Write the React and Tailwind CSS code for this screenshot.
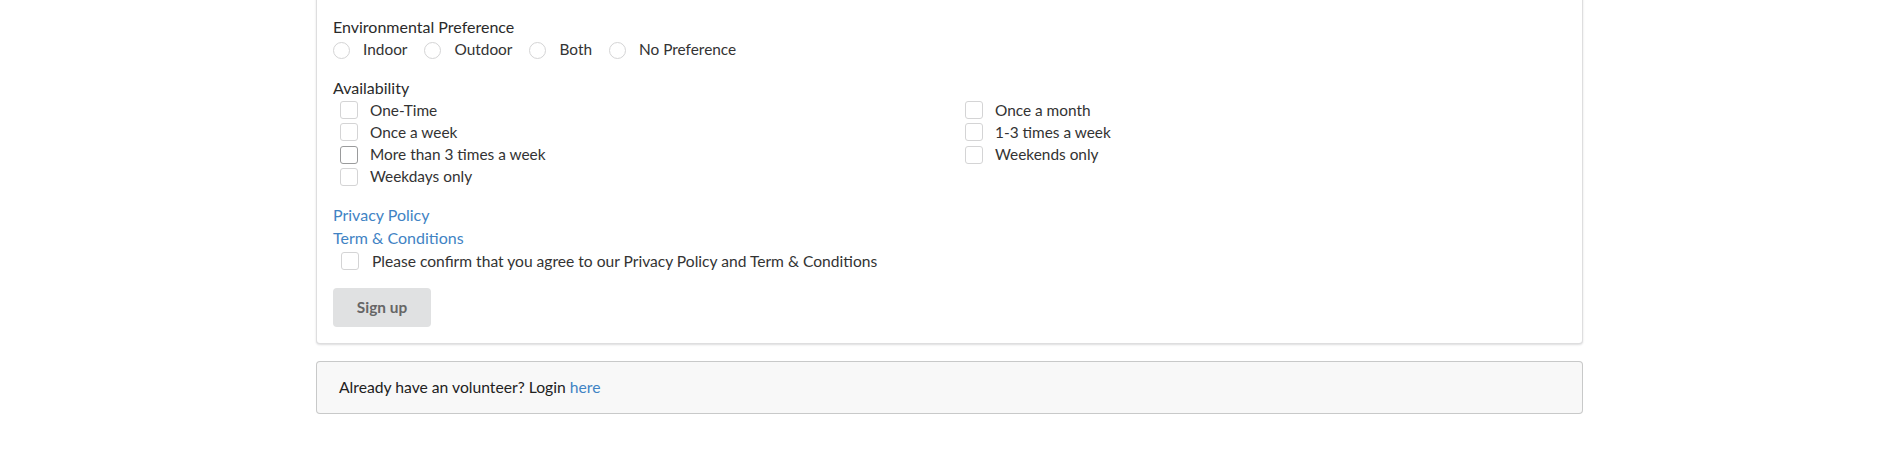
const Radio = ({ label }) => (
  <label className="flex items-center mr-[17px]">
    <span className="w-[17px] h-[17px] rounded-full border border-[#d4d4d5] bg-white" />
    <span className="ml-[13px]">{label}</span>
  </label>
);

const Check = ({ label, active }) => (
  <label className="flex items-center h-[22.3px] pl-[7px]">
    <span
      className={
        "w-[18px] h-[18px] rounded-[3px] border bg-white " +
        (active ? "border-[#9a9b9c]" : "border-[#d4d4d5]")
      }
    />
    <span className="ml-[12px] text-[#333333]">{label}</span>
  </label>
);

export default function App() {
  const left = ["One-Time", "Once a week", "More than 3 times a week", "Weekdays only"];
  const right = ["Once a month", "1-3 times a week", "Weekends only"];

  return (
    <div className="min-h-screen bg-white font-['Lato',sans-serif] text-[15.4px] text-[#212121] overflow-hidden">
      <div className="ml-[316px] w-[1267px]">
        {/* Form card */}
        <div className="-mt-[10px] bg-white rounded border border-[rgba(34,36,38,0.15)] shadow-[0_1px_2px_0_rgba(34,36,38,0.15)] pl-[16px] pt-[26px] pb-[16px]">
          <div className="h-[20px] leading-[20px] text-[16px] text-[#2a2a2a]">Environmental Preference</div>
          <div className="flex items-center h-[20px] mt-[3px] text-[#333333]">
            <Radio label="Indoor" />
            <Radio label="Outdoor" />
            <Radio label="Both" />
            <Radio label="No Preference" />
          </div>

          <div className="h-[20px] leading-[18px] mt-[19px] text-[16px] text-[#2a2a2a]">Availability</div>
          <div className="grid grid-cols-[625px_1fr]">
            <div className="flex flex-col">
              {left.map((l, i) => (
                <Check key={l} label={l} active={i === 2} />
              ))}
            </div>
            <div className="flex flex-col">
              {right.map((l) => (
                <Check key={l} label={l} />
              ))}
            </div>
          </div>

          <div className="mt-[15px] flex flex-col items-start text-[16px] text-[#4183c4]">
            <a href="#" className="h-[23px] leading-[23px]">Privacy Policy</a>
            <a href="#" className="h-[23px] leading-[23px]">Term &amp; Conditions</a>
          </div>

          <label className="flex items-center h-[20px] mt-[2px] pl-[8px]">
            <span className="w-[18px] h-[18px] rounded-[3px] border border-[#d4d4d5] bg-white" />
            <span className="ml-[13px] text-[15.6px] text-[#333333]">
              Please confirm that you agree to our Privacy Policy and Term &amp; Conditions
            </span>
          </label>

          <button className="mt-[17px] w-[98px] h-[39px] rounded bg-[#e0e1e2] text-[#666666] font-bold flex items-center justify-center">
            Sign up
          </button>
        </div>

        {/* Login message */}
        <div className="mt-[17px] h-[53px] rounded bg-[#f8f8f8] border border-[rgba(34,36,38,0.22)] pl-[22px] flex items-center text-[15.7px]">
          <span>
            Already have an volunteer? Login{" "}
            <a href="#" className="text-[#4183c4]">here</a>
          </span>
        </div>
      </div>
    </div>
  );
}
